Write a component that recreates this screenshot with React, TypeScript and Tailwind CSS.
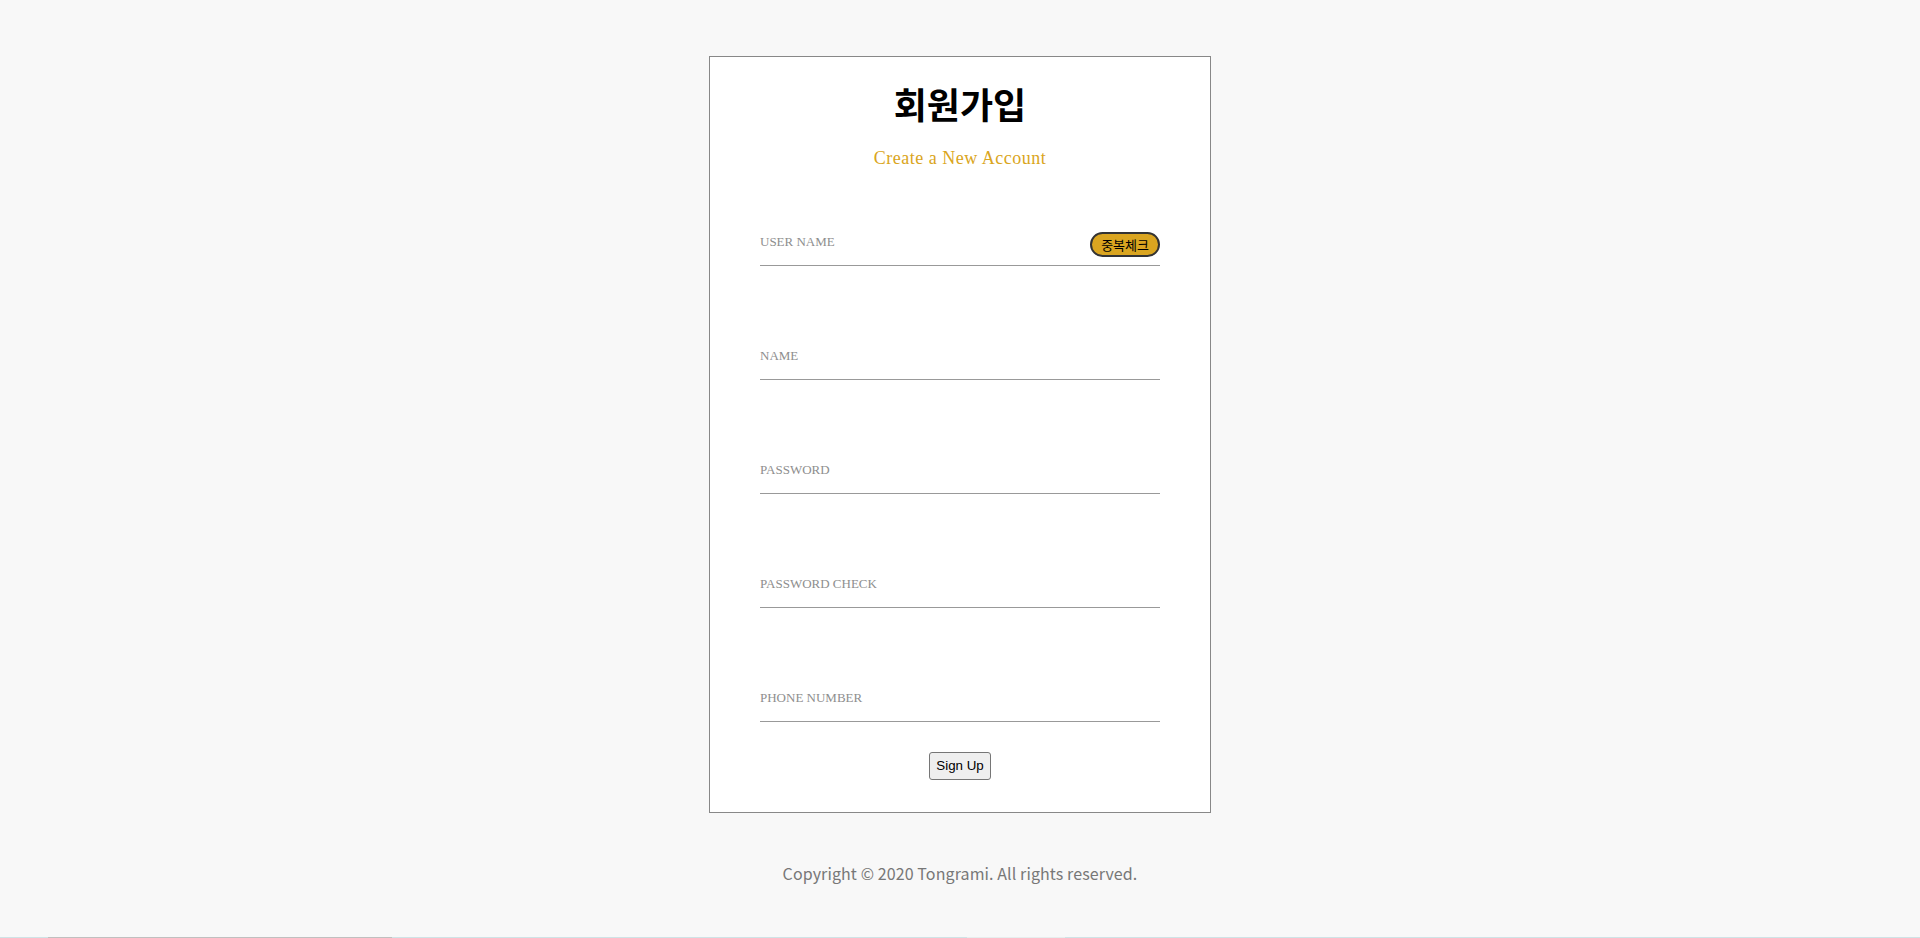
import React from 'react';

const fields = ['USER NAME', 'NAME', 'PASSWORD', 'PASSWORD CHECK', 'PHONE NUMBER'];

const Field: React.FC<{ label: string; first: boolean }> = ({ label, first }) => {
  return (
    <div
      className={`flex h-[34px] items-start justify-between border-b border-[#999] pb-[8px] ${first ? 'mt-[62px]' : 'mt-[80px]'}`}
    >
      <span className="mt-[2px] font-['Liberation_Serif',serif] text-[13px] leading-[16px] text-[#8e8e8e]">
        {label}
      </span>
      {first && (
        <button className="h-[25px] rounded-full border-2 border-[#333] bg-[#daa520] px-[9px] font-['Noto_Sans_CJK_KR',sans-serif] text-[13px] leading-[19px] text-black">
          중복체크
        </button>
      )}
    </div>
  );
};

const App: React.FC = () => {
  return (
    <div className="flex min-h-screen flex-col bg-[#f8f8f8]">
      <div className="mx-auto mt-[56px] w-[502px] border border-[#888] bg-white px-[50px] pb-[32px] pt-[26px]">
        <h1 className="text-center font-['Noto_Sans_CJK_KR',sans-serif] text-[36px] font-bold leading-[40px] text-black">
          회원가입
        </h1>
        <p className="mt-[23px] text-center font-['Liberation_Serif',serif] text-[18px] leading-[24px] tracking-[0.5px] text-[#daa520]">
          Create a New Account
        </p>
        {fields.map((f, i) => (
          <Field key={f} label={f} first={i === 0} />
        ))}
        <div className="mt-[30px] flex justify-center">
          <button className="h-[28px] rounded-[3px] border border-[#767676] bg-[#efefef] px-[6px] font-['Liberation_Sans',sans-serif] text-[13.33px] text-black">
            Sign Up
          </button>
        </div>
      </div>
      <p className="mt-[48px] text-center font-['Noto_Sans_CJK_KR',sans-serif] text-[16px] leading-[24px] tracking-[0.1px] text-[#777]">
        Copyright © 2020 Tongrami. All rights reserved.
      </p>
      <div className="mt-auto flex h-px">
        <div className="w-[48px] bg-[#cfe3e6]"></div>
        <div className="w-[344px] bg-[#c0c0c0]"></div>
        <div className="w-[575px] bg-[#cfe3e6]"></div>
        <div className="w-[98px] bg-[#e6eeee]"></div>
        <div className="flex-1 bg-[#cfe3e6]"></div>
      </div>
    </div>
  );
};

export default App;
